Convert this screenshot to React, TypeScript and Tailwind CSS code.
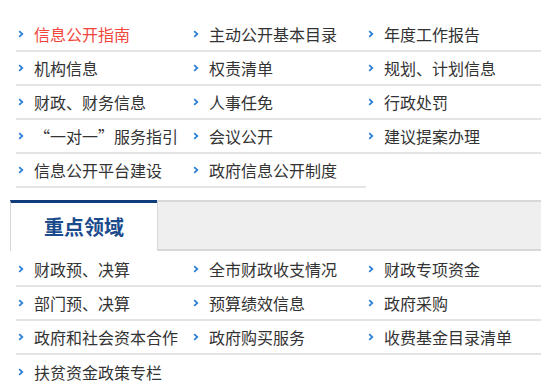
import React from "react";

const Bullet = () => (
  <svg width="6" height="8" viewBox="0 0 6 8" className="shrink-0">
    <polyline points="1.2,1.2 4.3,4 1.2,6.8" fill="none" stroke="#2a7fd8" strokeWidth="1.7" />
  </svg>
);

const top = [
  "信息公开指南", "主动公开基本目录", "年度工作报告",
  "机构信息", "权责清单", "规划、计划信息",
  "财政、财务信息", "人事任免", "行政处罚",
  "“一对一”服务指引", "会议公开", "建议提案办理",
  "信息公开平台建设", "政府信息公开制度",
];

const bottom = [
  "财政预、决算", "全市财政收支情况", "财政专项资金",
  "部门预、决算", "预算绩效信息", "政府采购",
  "政府和社会资本合作", "政府购买服务", "收费基金目录清单",
  "扶贫资金政策专栏",
];

const font = { fontFamily: '"Noto Sans CJK SC", "Noto Sans", sans-serif' };

function Item({ text, red, noBorder }: { text: string; red?: boolean; noBorder?: boolean }) {
  return (
    <li className={`h-[34px] flex items-center pl-[2px] ${noBorder ? "" : "border-b-2 border-[#e4e4e4]"}`}>
      <Bullet />
      <span className={`ml-[10px] text-[16px] leading-none whitespace-nowrap ${red ? "text-[#f2463c]" : "text-[#333333]"}`}>
        {text}
      </span>
    </li>
  );
}

export default function App() {
  return (
    <div className="w-[541px] h-[390px] bg-white overflow-hidden" style={font}>
      <ul className="pt-[18px] pl-[16px] grid grid-cols-[175px_175px_175px]">
        {top.map((t, i) => (
          <Item key={i} text={t} red={i === 0} />
        ))}
      </ul>
      <div className="mt-[12px] ml-[10px] flex h-[51px]">
        <div className="w-[147px] bg-white border-t-[3px] border-[#0f3d7c] border-l border-l-[#d6d6d6] flex items-center justify-center">
          <span className="text-[20px] font-bold text-[#1b4b8c] leading-none">重点领域</span>
        </div>
        <div className="flex-1 bg-[#efefef] border-t-2 border-b-2 border-l border-[#d8d8d8]" />
      </div>
      <ul className="pt-[2px] pl-[16px] grid grid-cols-[175px_175px_175px]">
        {bottom.map((t, i) => (
          <Item key={i} text={t} noBorder={i === 9} />
        ))}
      </ul>
    </div>
  );
}
